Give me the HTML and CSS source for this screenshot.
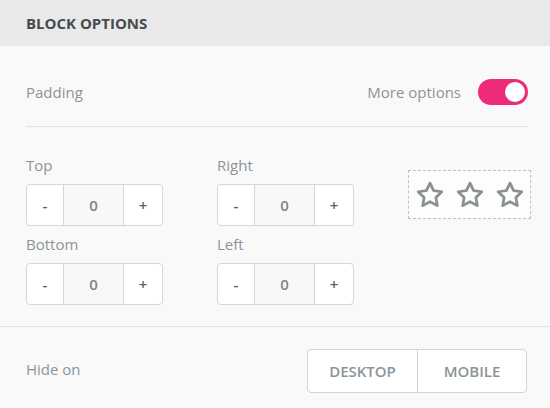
FILE: index.html
```html
<!DOCTYPE html>
<html>
<head>
<meta charset="utf-8">
<link rel="stylesheet" href="styles.css">
</head>
<body>
<div class="panel">
  <div class="header">BLOCK OPTIONS</div>
  <div class="body">
    <div class="row-top">
      <span class="label">Padding</span>
      <div class="more">
        <span class="label">More options</span>
        <div class="toggle"><span class="knob"></span></div>
      </div>
    </div>
    <div class="grid">
      <div class="col">
        <div class="field">
          <div class="label">Top</div>
          <div class="stepper"><span class="btn">-</span><span class="val">0</span><span class="btn">+</span></div>
        </div>
        <div class="field">
          <div class="label">Bottom</div>
          <div class="stepper"><span class="btn">-</span><span class="val">0</span><span class="btn">+</span></div>
        </div>
      </div>
      <div class="col">
        <div class="field">
          <div class="label">Right</div>
          <div class="stepper"><span class="btn">-</span><span class="val">0</span><span class="btn">+</span></div>
        </div>
        <div class="field">
          <div class="label">Left</div>
          <div class="stepper"><span class="btn">-</span><span class="val">0</span><span class="btn">+</span></div>
        </div>
      </div>
      <div class="stars">
        <svg viewBox="0 0 24 24"><path d="M12 2.5l2.9 6 6.6.9-4.8 4.6 1.2 6.5L12 17.4l-5.9 3.1 1.2-6.5-4.8-4.6 6.6-.9z"/></svg>
        <svg viewBox="0 0 24 24"><path d="M12 2.5l2.9 6 6.6.9-4.8 4.6 1.2 6.5L12 17.4l-5.9 3.1 1.2-6.5-4.8-4.6 6.6-.9z"/></svg>
        <svg viewBox="0 0 24 24"><path d="M12 2.5l2.9 6 6.6.9-4.8 4.6 1.2 6.5L12 17.4l-5.9 3.1 1.2-6.5-4.8-4.6 6.6-.9z"/></svg>
      </div>
    </div>
  </div>
  <div class="footer">
    <span class="label">Hide on</span>
    <div class="seg">
      <span class="seg-btn">DESKTOP</span>
      <span class="seg-btn">MOBILE</span>
    </div>
  </div>
</div>
</body>
</html>
```

FILE: styles.css
```css
* { box-sizing: border-box; }
html, body { margin: 0; padding: 0; }
body {
  width: 550px;
  height: 408px;
  background: #f9f9f9;
  font-family: "Open Sans", "Liberation Sans", sans-serif;
  overflow: hidden;
}
.header {
  height: 46px;
  background: #e9e9e9;
  display: flex;
  align-items: center;
  padding: 0 26px;
  font-size: 15px;
  font-weight: 700;
  color: #464b50;
}
.body {
  padding: 0 22px 0 26px;
}
.label {
  font-size: 15px;
  line-height: 20px;
  color: #8c9499;
}
.row-top {
  display: flex;
  align-items: center;
  justify-content: space-between;
  padding: 33px 0 21px;
  border-bottom: 1px solid #e2e2e2;
}
.more {
  display: flex;
  align-items: center;
  gap: 17px;
}
.toggle {
  width: 50px;
  height: 26px;
  border-radius: 13px;
  background: #ee2a7b;
  display: flex;
  align-items: center;
  justify-content: flex-end;
  padding-right: 3px;
}
.knob {
  width: 20px;
  height: 20px;
  border-radius: 50%;
  background: #fff;
}
.grid {
  display: flex;
  padding: 28px 0 21px;
}
.col {
  display: flex;
  flex-direction: column;
  gap: 8px;
  width: 137px;
  flex: none;
  margin-right: 54px;
}
.col + .col { margin-right: 0; }
.field .label { margin-bottom: 9px; }
.stepper {
  display: grid;
  grid-template-columns: 36px 61px 1fr;
  height: 42px;
  border: 1px solid #d6d6d6;
  border-radius: 4px;
  background: #fff;
  overflow: hidden;
}
.stepper span {
  display: flex;
  align-items: center;
  justify-content: center;
  font-size: 15px;
  font-weight: 600;
}
.btn { color: #5b6064; }
.val {
  color: #7e8488;
  background: #f8f8f8;
  border-left: 1px solid #d6d6d6;
  border-right: 1px solid #d6d6d6;
}
.stars {
  flex: none;
  margin-left: 54px;
  margin-top: 15px;
  width: 123px;
  height: 49px;
  border: 1px dashed #bcc1c4;
  background: #fdfdfd;
  display: flex;
  align-items: center;
  justify-content: center;
  gap: 10px;
}
.stars svg {
  width: 30px;
  height: 30px;
  fill: none;
  stroke: #8a9195;
  stroke-width: 2.2;
  stroke-linejoin: round;
}
.footer {
  border-top: 1px solid #e2e2e2;
  display: flex;
  align-items: center;
  justify-content: space-between;
  padding: 22px 23px 0 26px;
}
.footer .label { margin-top: -4px; }
.seg {
  display: flex;
  height: 44px;
  border: 1px solid #d3d3d3;
  border-radius: 4px;
  background: #fff;
  overflow: hidden;
}
.seg-btn {
  width: 109px;
  display: flex;
  align-items: center;
  justify-content: center;
  font-size: 15px;
  font-weight: 600;
  color: #8c9499;
}
.seg-btn + .seg-btn { border-left: 1px solid #d3d3d3; }
```
